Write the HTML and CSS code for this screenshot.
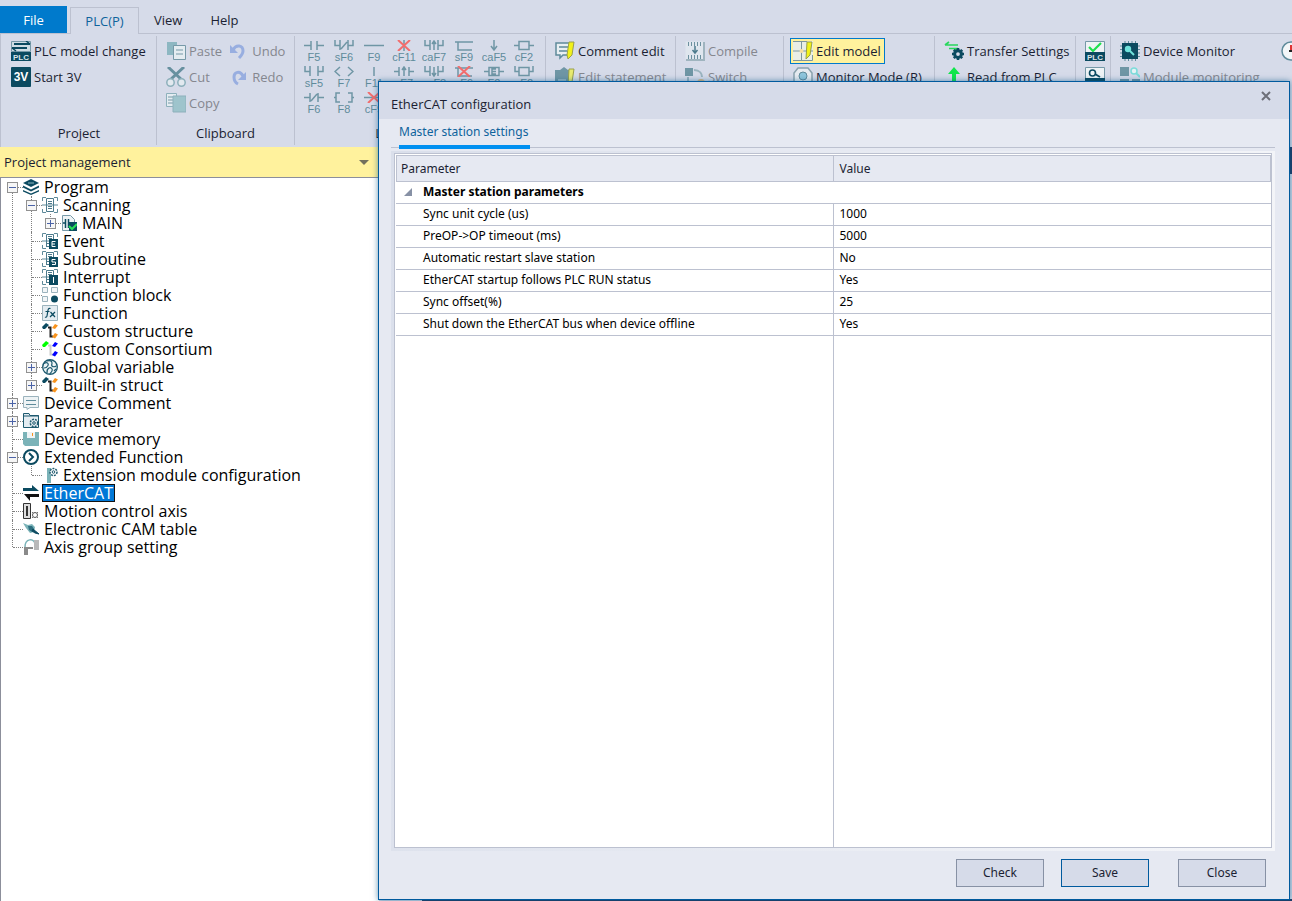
FILE: index.html
```html
<!DOCTYPE html>
<html lang="en">
<head>
<meta charset="utf-8">
<title>EtherCAT configuration</title>
<link rel="stylesheet" href="styles.css">
</head>
<body>
<svg class="defs" aria-hidden="true">
  <symbol id="doc" viewBox="0 0 16 16"><path d="M.5 4V.5H4M12 .5h3.500V4M.5 12v3.500H4M12 15.500h3.500V12M0 8h16" fill="none" stroke="#5f8b9b"/><path d="M4.500 1.500h7v13h-7zM6 4.500h4M6 6.500h4M6 9.500h4M6 11.500h4" fill="none" stroke="#4d7b8d"/></symbol>
  <symbol id="docsub" viewBox="0 0 16 16"><path d="M.5 4V.5H4M12 .5h3.500V4M.5 12v3.500H4M0 8h7" fill="none" stroke="#5f8b9b"/><path d="M4.500 14V1.500h7V6M6 3.500h4M6 5.500h4M4.500 10.500H7M4.500 13.500H7" fill="none" stroke="#4d7b8d"/><path d="M7 6h9v10H7z" fill="#0b4a60"/></symbol>
  <symbol id="struct" viewBox="0 0 16 16"><path d="M6 4.500h2.500v9H11" stroke="#222" stroke-width="2" fill="none"/><path d="M0 4l4-4 3 2-4 4H1z" fill="#0b4a60"/><path d="M10 5l3-4 3 1.500L13 6zM10 14l3-4 3 1.500-3 4z" fill="#f8931d"/></symbol>
  <symbol id="gear" viewBox="0 0 16 16"><circle cx="8" cy="8" r="4.500" fill="none" stroke="#0b4a60" stroke-width="4"/><path d="M8 0v3M8 13v3M0 8h3M13 8h3M2.400 2.400l2 2M11.600 11.600l2 2M2.400 13.600l2-2M11.600 4.400l2-2" stroke="#0b4a60" stroke-width="3.400"/></symbol>
  <symbol id="pages" viewBox="0 0 20 20"><path d="M1 1h10v13H1z" fill="#8db7c2"/><path d="M7.500 4.500h12v14h-12z" fill="#e4ecf1" stroke="#7699a8"/><path d="M10 9h7M10 13h7" stroke="#7699a8"/></symbol>
</svg>

<header class="ribbon">
  <nav class="tabs">
    <button class="tab tab-file">File</button>
    <button class="tab tab-active">PLC(P)</button>
    <button class="tab">View</button>
    <button class="tab">Help</button>
  </nav>
  <div class="groups">
    <section class="group g-project">
      <div class="cols"><div class="col">
        <button class="cmd"><svg viewBox="0 0 20 20"><path d="M.5.5h19v10H.5z" fill="#cfdde4" stroke="#7699a8"/><path d="M3 3h16M1 7h15" stroke="#0b4a60" stroke-width="2"/><path d="M15 0l4 3M5 10L1 7" stroke="#0b4a60" stroke-width="1.500"/><path d="M0 11h20v9H0z" fill="#0b4a60"/><text x="10" y="18.500" class="t-plc">PLC</text></svg>PLC model change</button>
        <button class="cmd"><svg viewBox="0 0 20 20"><rect width="20" height="20" rx="1" fill="#0b4a60"/><text x="10" y="14" class="t-3v">3V</text></svg>Start 3V</button>
      </div></div>
      <h2>Project</h2>
    </section>
    <section class="group g-clip">
      <div class="cols"><div class="col">
        <button class="cmd off"><svg viewBox="0 0 20 20"><use href="#pages"/></svg>Paste</button>
        <button class="cmd off"><svg viewBox="0 0 20 20"><path d="M2 0l14 13M18 0L4 13" stroke="#67909f" stroke-width="3"/><circle cx="4.500" cy="15.500" r="3.700" fill="#e2e9ef" stroke="#8db0bb" stroke-width="1.500"/><circle cx="15.500" cy="15.500" r="3.700" fill="#e2e9ef" stroke="#8db0bb" stroke-width="1.500"/></svg>Cut</button>
        <button class="cmd off"><svg viewBox="0 0 20 20"><path d="M.5.5h10v13H.5z" fill="#e4ecf1" stroke="#8db0bb"/><path d="M2 4h5M2 7h5M2 10h5" stroke="#7699a8"/><path d="M7 3h13v16H7z" fill="#9ec4cc" stroke="#8db0bb"/></svg>Copy</button>
      </div><div class="col">
        <button class="cmd off"><svg viewBox="0 0 20 20"><path d="M4 9c3-6 10-5 10 1 0 3-2 5-4 7" fill="none" stroke="#98aee0" stroke-width="3"/><path d="M1 4v8h8z" fill="#98aee0"/></svg>Undo</button>
        <button class="cmd off"><svg viewBox="0 0 20 20"><path d="M14 9C11 3 5 5 5 10c0 4 2 6 4 7" fill="none" stroke="#98aee0" stroke-width="3"/><path d="M17 5v8H9z" fill="#98aee0"/></svg>Redo</button>
      </div></div>
      <h2>Clipboard</h2>
    </section>
    <section class="group g-ladder">
      <div class="symbols">
        <button><svg viewBox="0 0 20 11"><path d="M0 5.500h7M7 1v9M13 1v9M13 5.500h7"/></svg>F5</button>
        <button><svg viewBox="0 0 20 11"><path d="M1 0v5.500h5M6 0v10M14 0v10M14 5.500h5V0M7 9l6-7"/></svg>sF6</button>
        <button><svg viewBox="0 0 20 11"><path d="M0 5.500h20"/></svg>F9</button>
        <button><svg viewBox="0 0 20 11"><path d="M10 0v11"/><path class="x" d="M4 0l12 11M16 0L4 11"/></svg>cF11</button>
        <button><svg viewBox="0 0 20 11"><path d="M1 0v5.500h5M6 0v10M14 0v10M14 5.500h5V0M10 1v9M8 4l2-3 2 3"/></svg>caF7</button>
        <button><svg viewBox="0 0 20 11"><path d="M1 2h18M4 2v8h14"/></svg>sF9</button>
        <button><svg viewBox="0 0 20 11"><path d="M10 0v9M7 6l3 4 3-4"/></svg>caF5</button>
        <button><svg viewBox="0 0 20 11"><path d="M0 5.500h5M5 1.500h10v8H5zM15 5.500h5"/></svg>cF2</button>
        <button><svg viewBox="0 0 20 11"><path d="M1 0v5.500h5M6 0v10M14 0v10M14 5.500h5V0"/></svg>sF5</button>
        <button><svg viewBox="0 0 20 11"><path d="M6 1L1 5.500 6 10M14 1l5 4.500L14 10"/></svg>F7</button>
        <button><svg viewBox="0 0 20 11"><path d="M10 1v9"/></svg>F11</button>
        <button><svg viewBox="0 0 20 11"><path d="M0 5.500h5M5 1v9M15 1v9M15 5.500h5M10 1v9M8 4l2-3 2 3"/></svg>sF7</button>
        <button><svg viewBox="0 0 20 11"><path d="M1 0v5.500h5M6 0v10M14 0v10M14 5.500h5V0M10 1v9M8 7l2 3 2-3"/></svg>caF8</button>
        <button><svg viewBox="0 0 20 11"><path d="M1 2h18M4 2v8h14"/><path class="x" d="M4 0l12 11M16 0L4 11"/></svg>cF9</button>
        <button><svg viewBox="0 0 20 11"><path d="M0 5.500h5M5 1.500h10v8H5zM15 5.500h5M12 3H8v5h4M8 5.500h4"/></svg>F2</button>
        <button><svg viewBox="0 0 20 11"><path d="M1 0v5.500h4M5 1.500h10v8H5zM15 5.500h4V0"/></svg>sF2</button>
        <button><svg viewBox="0 0 20 11"><path d="M0 5.500h6M6 1v9M14 1v9M14 5.500h6M7 9l6-7"/></svg>F6</button>
        <button><svg viewBox="0 0 20 11"><path d="M6 1H2v9h4M0 5.500h2M14 1h4v9h-4M18 5.500h2"/></svg>F8</button>
        <button><svg viewBox="0 0 20 11"><path d="M0 5.500h20"/><path class="x" d="M4 0l12 11M16 0L4 11"/></svg>cF9</button>
      </div>
      <h2>Ladder symbol</h2>
    </section>
    <section class="group g-comment">
      <div class="col">
        <button class="cmd"><svg viewBox="0 0 20 20"><path d="M1 2h15v12H8l-3 3v-3H1z" fill="#e8eff2" stroke="#5f8b9b" stroke-width="1.500"/><path d="M4 6h9M4 10h8" stroke="#5f8b9b" stroke-width="1.500"/><path d="M14 1h5l-2 13-4 4-1-4z" fill="#f2f21a" stroke="#9aa04a"/></svg>Comment edit</button>
        <button class="cmd off"><svg viewBox="0 0 20 20"><path d="M0 3h5l4-3 4 3h4v14H0z" fill="#6f96a5"/><path d="M3 13h8" stroke="#c6d6df"/><path d="M14 2h5l-2 13-4 4z" fill="#e8ea70" stroke="#9aa04a"/></svg>Edit statement</button>
      </div>
    </section>
    <section class="group g-compile">
      <div class="col">
        <button class="cmd off"><svg viewBox="0 0 20 20"><path d="M.5.5h18v18H.5z" fill="#dfe6ee"/><path d="M19 1v18H1" fill="none" stroke="#9fb4bf" stroke-width="2"/><path d="M3 3h14M3 16h14" stroke="#6c909f" stroke-width="4" stroke-dasharray="1 2"/><path d="M10 5v6M7.500 9l2.500 3 2.500-3" fill="none" stroke="#4d7b8d" stroke-width="1.500"/></svg>Compile</button>
        <button class="cmd off"><svg viewBox="0 0 20 20"><path d="M0 1h8v8H0z" fill="#6f96a5"/><path d="M9 3c6 0 8 4 8 7" fill="none" stroke="#9ab4bf" stroke-width="2"/><path d="M3 10v4l6 5" fill="none" stroke="#9ab4bf" stroke-width="2"/><circle cx="16" cy="16" r="4" fill="#dcb986"/></svg>Switch</button>
      </div>
    </section>
    <section class="group g-mode">
      <div class="col">
        <button class="cmd selected"><svg viewBox="0 0 20 20"><path d="M0 0h20v20H0z" fill="#e9eee6"/><path d="M0 10h20M8.500 0v20M0 .5h14M0 19.500h19.500V14" fill="none" stroke="#7d979f"/><circle cx="8.500" cy="10" r="2" fill="#f6dfa0"/><path d="M14 1h5l-2 13-4 4z" fill="#f2f21a" stroke="#9aa04a"/></svg>Edit model</button>
        <button class="cmd"><svg viewBox="0 0 20 20"><path d="M5 1h10l4 5v8l-4 4H5l-4-4V6z" fill="#e6ebf0" stroke="#8aa2ad" stroke-width="1.500"/><circle cx="10" cy="9" r="4" fill="#8fc6dc" stroke="#5f8b9b"/></svg>Monitor Mode (R)</button>
      </div>
    </section>
    <section class="group g-transfer">
      <div class="col">
        <button class="cmd"><svg viewBox="0 0 20 20"><path d="M1 4h13M5 7.500h9M1 4l4-3M14 7.500l-4 2" fill="none" stroke="#27d85c" stroke-width="1.700"/><use href="#gear" x="8" y="7" width="12" height="12"/></svg>Transfer Settings</button>
        <button class="cmd"><svg viewBox="0 0 20 20"><path d="M10 0l6 7h-4v13H8V7H4z" fill="#11e64c"/></svg>Read from PLC</button>
      </div>
    </section>
    <section class="group g-verify">
      <div class="col">
        <button class="cmd" aria-label="Verify PLC"><svg viewBox="0 0 20 20"><path d="M.5.5h19v11H.5z" fill="#eef3f5" stroke="#7699a8"/><path d="M4 6l4 4 8-8" fill="none" stroke="#1fe04f" stroke-width="2.200"/><path d="M0 11h20v9H0z" fill="#0b4a60"/><text x="10" y="18.500" class="t-plc">PLC</text></svg></button>
        <button class="cmd" aria-label="Search PLC"><svg viewBox="0 0 20 20"><path d="M.5.5h19v11H.5z" fill="#eef3f5" stroke="#7699a8"/><circle cx="7.500" cy="6" r="3" fill="none" stroke="#0b4a60" stroke-width="1.600"/><path d="M10 7l5 3" stroke="#0b4a60" stroke-width="1.600"/><path d="M0 11h20v9H0z" fill="#0b4a60"/></svg></button>
      </div>
    </section>
    <section class="group g-monitor">
      <div class="col">
        <button class="cmd"><svg viewBox="0 0 20 20"><path d="M0 5h20M0 8.500h20M0 12h20M0 15.500h20M5 0v20M8.500 0v20M12 0v20M15.500 0v20" stroke="#5f8b9b"/><path d="M2 2h16v16H2z" fill="#0b4a60"/><circle cx="8" cy="8" r="3.200" fill="#6fe3dc"/><path d="M10 10l4 4" stroke="#6fe3dc" stroke-width="2"/></svg>Device Monitor</button>
        <button class="cmd off"><svg viewBox="0 0 20 20"><path d="M0 0h9v9H0zM0 12h9v8H0zM12 12h8v8h-8z" fill="#6f96a5"/><circle cx="14" cy="4" r="3" fill="#e5f3f5" stroke="#7cdcda" stroke-width="1.500"/><path d="M16 6l4 4" stroke="#7cdcda" stroke-width="2"/></svg>Module monitoring</button>
      </div>
      <button class="clock" aria-label="Clock"><svg viewBox="0 0 20 20"><circle cx="10" cy="10" r="9" fill="#f3f6f8" stroke="#5f8b9b" stroke-width="1.500"/><path d="M10 4v6" stroke="#d33" stroke-width="2"/><path d="M8 10h6" stroke="#222" stroke-width="2"/></svg></button>
    </section>
  </div>
</header>

<main class="workspace">
  <aside class="sidebar">
    <div class="side-head"><span>Project management</span><button class="drop" aria-label="Panel menu"></button></div>
    <ul class="tree">
      <li><div class="row"><button class="tog" aria-label="Collapse"></button><svg viewBox="0 0 16 16"><path d="M8 0l8 4-8 4-8-4z" fill="#0b4a60"/><path d="M0 6.500l8 4 8-4v2l-8 4-8-4zM0 11l8 3.500 8-3.500v1.500L8 16l-8-3.500z" fill="#0b4a60"/><path d="M5 4h6" stroke="#8db7c2"/></svg><span>Program</span></div>
        <ul>
          <li><div class="row"><button class="tog" aria-label="Collapse"></button><svg><use href="#doc"/></svg><span>Scanning</span></div>
            <ul>
              <li><div class="row"><button class="tog plus" aria-label="Expand"></button><svg viewBox="0 0 16 16"><path d="M1.500.5h8l4 4v11h-12z" fill="#eef3f5" stroke="#7699a8"/><path d="M2 8h2M4.500 4v9M7.500 4v9" stroke="#0b4a60" stroke-width="1.500"/><path d="M8 7h8v9H8z" fill="#0b4a60"/><path d="M8 11l3 3 5-5" fill="none" stroke="#28e05a" stroke-width="2"/></svg><span>MAIN</span></div></li>
            </ul>
          </li>
          <li><div class="row"><i></i><svg viewBox="0 0 16 16"><use href="#docsub"/><path d="M13.500 8.500H10v5h3.500M10 11h3" fill="none" stroke="#fff"/></svg><span>Event</span></div></li>
          <li><div class="row"><i></i><svg viewBox="0 0 16 16"><use href="#docsub"/><path d="M13.500 8.500H10V11h3.500v2.500H10" fill="none" stroke="#fff"/></svg><span>Subroutine</span></div></li>
          <li><div class="row"><i></i><svg viewBox="0 0 16 16"><use href="#docsub"/><path d="M11.500 8v6" fill="none" stroke="#fff"/></svg><span>Interrupt</span></div></li>
          <li><div class="row"><i></i><svg viewBox="0 0 16 16"><path d="M.5.5h5v5h-5zM9.500.5h6v5h-6zM.5 9.500h5v5h-5z" fill="#f2f5f7" stroke="#9bb3bd"/><circle cx="12.500" cy="12" r="3.500" fill="#0b4a60"/></svg><span>Function block</span></div></li>
          <li><div class="row"><i></i><svg viewBox="0 0 16 16"><path d="M.5.5h15v15H.5z" fill="#e4ecf1" stroke="#9bb3bd"/><path d="M8.500 3.500C6 2.500 6 5 5.500 8S5 13 3 12M3.500 6.500h4M8.500 7l4.500 5M13 7l-5 5" fill="none" stroke="#0b4a60" stroke-width="1.200"/></svg><span>Function</span></div></li>
          <li><div class="row"><i></i><svg><use href="#struct"/></svg><span>Custom structure</span></div></li>
          <li><div class="row"><i></i><svg viewBox="0 0 16 16"><path d="M6 4.500h2.500v9H11" stroke="#ccc" fill="none" stroke-width="2"/><path d="M0 4l4-4 3 2-4 4H1z" fill="#0f0"/><path d="M10 5l3-4 3 1.500L13 6zM10 14l3-4 3 1.500-3 4z" fill="#00f"/></svg><span>Custom Consortium</span></div></li>
          <li><div class="row"><button class="tog plus" aria-label="Expand"></button><svg viewBox="0 0 16 16"><circle cx="8" cy="8" r="7.300" fill="#eef5f7" stroke="#1f5b70" stroke-width="1.400"/><path d="M2 4.500c3-2 5 0 4 2S3 9 2 9M5 2c3-1 5 0 5 2s-1 2 0 3 3 1 4 0M5 14c0-3 0-4 2-5s4 1 3 3-2 2-2 3M12 12l2-2" fill="none" stroke="#1f5b70" stroke-width="1.200"/></svg><span>Global variable</span></div></li>
          <li><div class="row"><button class="tog plus" aria-label="Expand"></button><svg><use href="#struct"/></svg><span>Built-in struct</span></div></li>
        </ul>
      </li>
      <li><div class="row"><button class="tog plus" aria-label="Expand"></button><svg viewBox="0 0 16 16"><path d="M.5 1.500h15v11H7l-3 2v-2H.5z" fill="#eef3f5" stroke="#9bb3bd"/><path d="M3 5.500h10M3 9.500h10" stroke="#5f8b9b"/></svg><span>Device Comment</span></div></li>
      <li><div class="row"><button class="tog plus" aria-label="Expand"></button><svg viewBox="0 0 16 16"><path d="M.5.5H6l1 2h8.500v12H.5z" fill="#e4ecf1" stroke="#1f5b70"/><path d="M0 3h16" stroke="#1f5b70"/><circle cx="11" cy="10" r="3.700" fill="#e4ecf1" stroke="#1f5b70" stroke-width="1.500" stroke-dasharray="2 1"/><circle cx="11" cy="10" r="1.300" fill="none" stroke="#1f5b70"/></svg><span>Parameter</span></div></li>
      <li><div class="row"><i></i><svg viewBox="0 0 16 16"><path d="M0 1h16v14H2l-2-2z" fill="#7bb3b8"/><path d="M4 1h8v6H4z" fill="#eef3f5"/><path d="M9.500 2v3" stroke="#f8931d"/></svg><span>Device memory</span></div></li>
      <li><div class="row"><button class="tog" aria-label="Collapse"></button><svg viewBox="0 0 16 16"><circle cx="8" cy="8" r="7" fill="#fff" stroke="#0b4a60" stroke-width="2"/><path d="M6 4l4 4-4 4" fill="none" stroke="#0b4a60" stroke-width="2"/></svg><span>Extended Function</span></div>
        <ul>
          <li><div class="row"><i></i><svg viewBox="0 0 16 16"><path d="M5 1h4v15H5z" fill="#7bb3b8"/><circle cx="11.500" cy="5" r="3.500" fill="#fff" stroke="#1f5b70" stroke-width="1.500" stroke-dasharray="2 1"/><circle cx="11.500" cy="5" r="1.300" fill="none" stroke="#1f5b70"/></svg><span>Extension module configuration</span></div></li>
        </ul>
      </li>
      <li><div class="row"><i></i><svg viewBox="0 0 16 16"><path d="M0 3h9V0l7 6H0z" fill="#0b4a60"/><path d="M16 9H1l6 7v-4h9z" fill="#111"/></svg><span class="sel">EtherCAT</span></div></li>
      <li><div class="row"><i></i><svg viewBox="0 0 16 16"><path d="M.5.500h7v15h-7z" fill="#ddd" stroke="#333"/><path d="M4 3v10" stroke="#333" stroke-width="2"/><path d="M9 9l6 6M15 9l-6 6" stroke="#777"/><circle cx="12" cy="12" r="2.500" fill="#fff" stroke="#555"/></svg><span>Motion control axis</span></div></li>
      <li><div class="row"><i></i><svg viewBox="0 0 16 16"><path d="M0 2l5 2 4-1 3 3-1 5-4 1-4-5z" fill="#7bb3b8"/><path d="M5 5h4l2 3-2 3-3-2z" fill="#2e6f80"/><path d="M10 8l6 5-4-1-3-2z" fill="#0b4a60" stroke="#0b4a60"/></svg><span>Electronic CAM table</span></div></li>
      <li><div class="row"><i></i><svg viewBox="0 0 16 16"><path d="M2 8c0-9 9-9 10-3" fill="none" stroke="#7bb3b8" stroke-width="1.500"/><path d="M1 8h9v2H5v6H1z" fill="#8a8a8a"/><path d="M11 1h5v10h-5z" fill="#b9b9b9"/></svg><span>Axis group setting</span></div></li>
    </ul>
  </aside>
  <section class="editor"><div class="strip"></div><div class="pane"></div></section>
</main>

<div class="dialog" role="dialog" aria-labelledby="dlg-title">
  <header class="dlg-head"><h1 id="dlg-title">EtherCAT configuration</h1>
    <button class="close" aria-label="Close window"><svg viewBox="0 0 10 10"><path d="M1 1l8 8M9 1L1 9" stroke="#6d6f78" stroke-width="2"/></svg></button></header>
  <div class="dlg-tabs"><button>Master station settings</button></div>
  <div class="frame"><div class="sheet">
    <table>
      <thead><tr><th>Parameter</th><th>Value</th></tr></thead>
      <tbody>
        <tr class="cat"><th colspan="2"><svg viewBox="0 0 8 8"><path d="M8 0v8H0z" fill="#8791a5"/></svg>Master station parameters</th></tr>
        <tr><td>Sync unit cycle (us)</td><td>1000</td></tr>
        <tr><td>PreOP-&gt;OP timeout (ms)</td><td>5000</td></tr>
        <tr><td>Automatic restart slave station</td><td>No</td></tr>
        <tr><td>EtherCAT startup follows PLC RUN status</td><td>Yes</td></tr>
        <tr><td>Sync offset(%)</td><td>25</td></tr>
        <tr><td>Shut down the EtherCAT bus when device offline</td><td>Yes</td></tr>
        <tr class="rest"><td></td><td></td></tr>
      </tbody>
    </table>
  </div></div>
  <footer class="actions">
    <button>Check</button><button class="primary">Save</button><button class="last">Close</button>
  </footer>
</div>
</body>
</html>
```
FILE: styles.css
```css
* { box-sizing: border-box; }
body {
  margin: 0;
  height: 100vh;
  overflow: hidden;
  display: flex;
  flex-direction: column;
  position: relative;
  background: #d6dbe9;
  color: #1b1f33;
  font: 13px "Open Sans", "Noto Sans", sans-serif;
}
button { font: inherit; color: inherit; background: none; border: 0; padding: 0; margin: 0; }
h1, h2 { font: inherit; margin: 0; }
.defs { display: none; }

/* Ribbon */
.tabs {
  display: flex;
  align-items: flex-end;
  height: 34px;
  border-bottom: 1px solid #bcc1d0;
}
.tab { height: 27px; padding: 0 13px 0 15px; }
.tab-file { background: #007acc; color: #fff; width: 67px; margin-right: 3px; padding: 0; }
.tab-active {
  width: 69px;
  padding: 0;
  margin-bottom: -1px;
  border: 1px solid #bcc1d0;
  border-bottom: 0;
  background: #d6dbe9;
  color: #0e639c;
}
.groups {
  display: flex;
  height: 113px;
  padding: 2px 0;
  overflow: hidden;
  border-left: 1px solid #bcc1d0;
}
.group {
  flex: none;
  display: flex;
  justify-content: space-between;
  padding: 2px 0 2px 8px;
  border-right: 1px solid #bcc1d0;
}
.g-project, .g-clip, .g-ladder { flex-direction: column; }
.group h2 { text-align: center; line-height: 20px; margin-left: -8px; }
.g-project { width: 156px; padding-left: 9px; }
.g-clip { width: 138px; }
.g-ladder { width: 251px; }
.g-comment { width: 130px; }
.g-compile { width: 108px; }
.g-mode { width: 151px; padding-left: 6px; }
.g-transfer { width: 141px; }
.g-verify { width: 35px; }
.g-monitor { width: 190px; border: 0; }
.cols { display: flex; gap: 5px; }
.col { display: flex; flex-direction: column; align-items: flex-start; }
.cmd {
  display: flex;
  align-items: center;
  gap: 3px;
  height: 26px;
  padding: 0 1px;
  white-space: nowrap;
}
.cmd svg, .clock svg { width: 20px; height: 20px; flex: none; display: block; }
.off { color: #85878f; }
.selected { background: #fff29d; border: 1px solid #007acc; padding: 0 3px 0 2px; }
.g-mode .cmd:not(.selected) { padding-left: 3px; }
.clock { height: 26px; }
.t-plc { font: bold 8px "Liberation Sans", sans-serif; fill: #d8e6ea; text-anchor: middle; }
.t-3v { font: bold 12px "Liberation Sans", sans-serif; fill: #fff; text-anchor: middle; }
.symbols { display: grid; grid-template-columns: repeat(8, 30px); grid-auto-rows: 26px; margin-left: -4px; }
.symbols button {
  display: flex;
  flex-direction: column;
  align-items: center;
  padding-top: 2px;
  font: 11px/12px "Liberation Sans", sans-serif;
  color: #5f8b9b;
}
.symbols svg { width: 20px; height: 11px; flex: none; fill: none; stroke: #6f96a5; stroke-width: 1.500; }
.symbols .x { stroke: #f26d6d; stroke-width: 2; }

/* Workspace */
.workspace { flex: 1; display: flex; min-height: 0; }
.sidebar { width: 379px; flex: none; display: flex; flex-direction: column; }
.side-head {
  display: flex;
  justify-content: space-between;
  align-items: center;
  height: 30px;
  padding: 0 10px 0 4px;
  background: #fff29d;
}
.drop { border: 5px solid transparent; border-top: 5px solid #72705c; border-bottom: 0; }
.tree {
  flex: 1;
  padding: 0 0 0 2px;
  border: 1px solid #8c8f9b;
  border-width: 1px 0 0 1px;
  background: #fff;
  color: #000;
  font: 16px/18px "Open Sans", "Noto Sans", sans-serif;
}
.tree, .tree ul { margin: 0; list-style: none; }
.tree ul { padding: 0; margin-left: 19px; }
.tree li { position: relative; }
.tree li::before {
  content: "";
  position: absolute;
  left: 9px;
  top: 0;
  bottom: 0;
  border-left: 1px dotted #808080;
}
.tree > li:first-child::before { top: 9px; }
.tree li:last-child::before { bottom: auto; height: 9px; }
.row { display: flex; align-items: center; height: 18px; position: relative; }
.row::before {
  content: "";
  position: absolute;
  left: 10px;
  top: 9px;
  width: 10px;
  border-top: 1px dotted #808080;
}
.row svg { width: 16px; height: 16px; flex: none; margin-right: 3px; }
.row i { width: 20px; }
.row span { padding: 0 2px; }
.row .sel { background: #0078d7; color: #fff; outline: 1px solid #111; outline-offset: -1px; }
.tog {
  position: relative;
  width: 11px;
  height: 11px;
  margin: 0 5px 0 4px;
  border: 1px solid #919191;
  background: linear-gradient(#4b63a7, #4b63a7) center / 7px 1px no-repeat, #f6f6f6;
}
.tog.plus {
  background: linear-gradient(#4b63a7, #4b63a7) center / 7px 1px no-repeat, linear-gradient(#4b63a7, #4b63a7) center / 1px 7px no-repeat, #f6f6f6;
}
.editor { flex: 1; display: flex; flex-direction: column; background: #cfd9e8; }
.strip { height: 27px; background: #1e3c66; }
.pane { flex: 1; margin-left: 43px; border-bottom: 2px solid #1e3c66; }

/* Dialog */
.dialog {
  position: absolute;
  inset: 81px 2px 1px 378px;
  display: flex;
  flex-direction: column;
  border: 1px solid #005a9e;
  background: #e6e9f2;
  box-shadow: 0 0 6px rgba(0, 80, 130, .6);
  font: 12px "Noto Sans", sans-serif;
}
.dlg-head {
  display: flex;
  justify-content: space-between;
  height: 37px;
  padding: 0 18px 0 12px;
  background: #d6dbe9;
}
.dlg-head h1 { font: 13px/44px "Open Sans", sans-serif; }
.close { height: 28px; }
.close svg { width: 10px; height: 10px; display: block; }
.dlg-tabs {
  height: 29px;
  margin: 0 14px 3px 12px;
  padding-left: 8px;
  border-bottom: 1px solid #bcc1d0;
}
.dlg-tabs button {
  display: block;
  height: 30px;
  padding: 0 2px 2px 0;
  border-bottom: 4px solid #0090f1;
  color: #0e639c;
}
.frame {
  flex: 1;
  display: flex;
  margin: 0 14px 0 12px;
  padding: 2px 3px 3px;
  background: linear-gradient(100deg, #dadfeb, #f6f7fa);
}
.sheet { flex: 1; padding: 1px 0 0 1px; background: #fff; border: 1px solid #bcc1d0; }
table { width: 100%; height: 100%; border-collapse: separate; border-spacing: 0; table-layout: fixed; color: #000; }
tr { height: 22px; }
td, th { height: 22px; padding: 0 0 1px 6px; border-bottom: 1px solid #bcc1d0; text-align: left; line-height: 18px; }
td:first-child { padding-left: 27px; border-right: 1px solid #bcc1d0; }
thead th { height: 27px; padding-bottom: 0; background: #e6e9f2; border: 1px solid #bcc1d0; border-left: 0; font-weight: 400; color: #1b1f33; }
thead th:first-child { border-left: 1px solid #bcc1d0; padding-left: 4px; }
.cat th { padding-left: 8px; }
.cat svg { width: 8px; height: 8px; margin-right: 11px; }
.rest, .rest td { height: auto; border-bottom: 0; }
.actions { display: flex; justify-content: flex-end; gap: 17px; padding: 8px 23px 12px; }
.actions button { width: 88px; height: 28px; padding-bottom: 1px; border: 1px solid #8791a5; background: #d6dbe9; }
.actions .primary { border-color: #005a9e; }
.actions .last { margin-left: 12px; }
```
